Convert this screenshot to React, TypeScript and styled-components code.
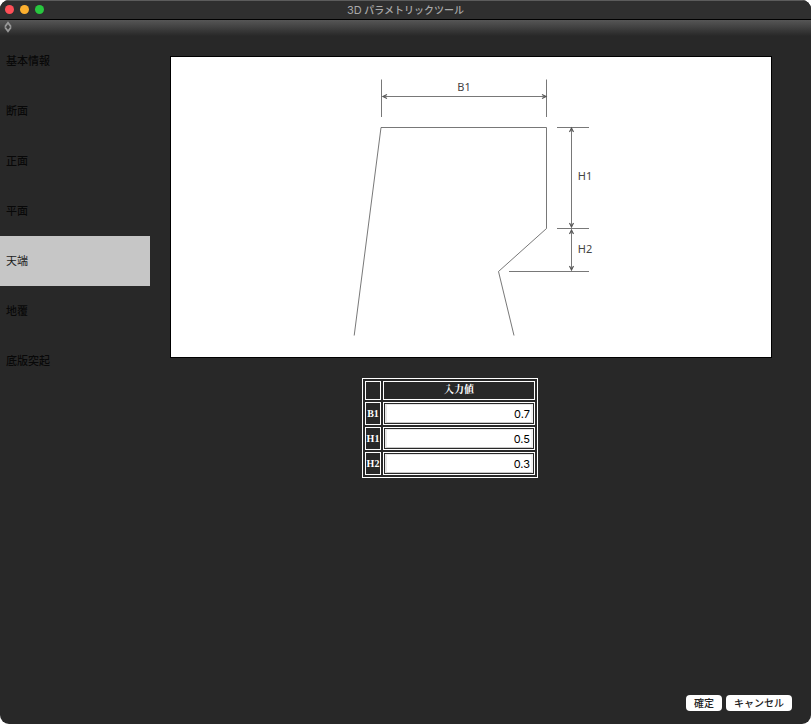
import React, { useState } from "react";
import styled, { createGlobalStyle } from "styled-components";

const GlobalStyle = createGlobalStyle`
  * { box-sizing: border-box; }
  body {
    margin: 0;
    background: #fff;
    font-family: Inter, "Noto Sans CJK JP", sans-serif;
    font-size: 11px;
  }
`;

const Window = styled.div`
  display: flex;
  flex-direction: column;
  min-height: 100vh;
  overflow: hidden;
  border-radius: 9px;
  background: #282828;
`;

const TitleBar = styled.header`
  display: grid;
  grid-template-columns: 1fr auto 1fr;
  align-items: center;
  height: 20px;
  padding: 0 5px 1px;
  background: #2f2f2f;
  border-top: 1px solid #5c5c5c;
  border-bottom: 1px solid #000;
`;

const Lights = styled.div`
  display: flex;
  gap: 6px;
`;

const Light = styled.button<{ $color: string }>`
  width: 9px;
  height: 9px;
  padding: 0;
  border: 0;
  border-radius: 50%;
  background: ${(p) => p.$color};
`;

const Title = styled.h1`
  margin: 0;
  font-size: 10px;
  font-weight: 500;
  line-height: 16px;
  color: #a9a9a9;
`;

const Latin = styled.span`
  font-size: 11px;
  font-weight: 400;
`;

const Toolbar = styled.div`
  display: flex;
  height: 16px;
  padding: 1px 3px;
  background: linear-gradient(#565656, #282828);
`;

const ToolbarToggle = styled.button`
  display: flex;
  width: 10px;
  height: 12px;
  padding: 0;
  border: 0;
  background: none;
`;

const Body = styled.div`
  display: flex;
  flex: 1;
`;

const Sidebar = styled.nav`
  display: flex;
  flex-direction: column;
  flex: none;
  width: 150px;
`;

const NavItem = styled.button<{ $active: boolean }>`
  height: 50px;
  padding: 0 6px 2px;
  border: 0;
  background: ${(p) => (p.$active ? "#c6c6c6" : "transparent")};
  color: ${(p) => (p.$active ? "#1c1c1c" : "#080808")};
  font: inherit;
  font-weight: ${(p) => (p.$active ? 400 : 500)};
  text-align: left;
`;

const Main = styled.main`
  display: flex;
  flex: 1;
  flex-direction: column;
  gap: 20px;
  min-width: 0;
  padding: 20px 39px 12px 20px;
`;

const Figure = styled.figure`
  margin: 0;
  border: 1px solid #000;
  background: #fff;
`;

const Drawing = styled.svg`
  display: block;
  width: 100%;
  height: auto;
  fill: none;
  stroke: #555;
  stroke-width: 0.8;
`;

const Label = styled.text`
  fill: #444;
  stroke: none;
  font-family: "Noto Sans", sans-serif;
  font-size: 11px;
  text-anchor: middle;
`;

const Values = styled.section`
  display: flex;
  justify-content: center;
  padding-right: 42px;
`;

const ValueTable = styled.table`
  table-layout: fixed;
  width: 176px;
  border: 1px solid #fff;
  border-spacing: 2px;
  color: #fff;
  font-family: "Liberation Serif", "Noto Serif CJK JP", "Noto Sans CJK JP", serif;
  font-size: 10px;
  line-height: 15px;
`;

const HeadCell = styled.th<{ $narrow?: boolean }>`
  width: ${(p) => (p.$narrow ? "16px" : "auto")};
  padding: 0 1px 2px;
  border: 1px solid #fff;
  white-space: nowrap;
`;

const RowCell = styled.th`
  padding: 0;
  border: 1px solid #fff;
`;

const ValueCell = styled.td`
  padding: 1px;
  border: 1px solid #fff;
`;

const ValueInput = styled.input`
  display: block;
  width: 100%;
  height: 19px;
  padding: 0 1px;
  border: 2px solid;
  border-color: #e6e6e6 #f4f4f4 #c8c8c8 #e6e6e6;
  border-width: 1px 2px;
  outline: 0;
  background: #fff;
  color: #000;
  font-family: Inter, sans-serif;
  font-size: 11px;
  text-align: right;
`;

const Footer = styled.footer`
  display: flex;
  justify-content: flex-end;
  gap: 4px;
  padding: 0 19px 13px;
`;

const Button = styled.button`
  height: 16px;
  padding: 0 8px;
  border: 0;
  border-radius: 4px;
  background: #fff;
  color: #222;
  font-family: inherit;
  font-size: 10px;
  font-weight: 500;
  line-height: 16px;
`;

const sections = ["基本情報", "断面", "正面", "平面", "天端", "地覆", "底版突起"];
const lights = [
  { name: "閉じる", color: "#ff4f57" },
  { name: "しまう", color: "#fdb02f" },
  { name: "拡大", color: "#28c73f" },
];

function CrestDiagram() {
  return (
    <Drawing viewBox="0 0 600 300" role="img" aria-label="天端寸法図">
      <path d="M183.2 278.5 210 70.5H375.5V171.5L327.5 214.5 343 278.5" />
      <path d="M210.5 22.5V60M375.5 22.5V60M386 70.5H418M386 171.5H418M338 214.5H418" />
      <path d="M212 39.5H375M400.5 71V170M400.5 173V213" />
      <path
        strokeWidth="1.2"
        d="M216 37.5 212 39.5 216 41.5M371 37.5 375 39.5 371 41.5M398.5 75 400.5 71 402.5 75M398.5 166 400.5 170 402.5 166M398.5 177 400.5 173 402.5 177M398.5 209 400.5 213 402.5 209"
      />
      <Label x="293" y="34">B1</Label>
      <Label x="414" y="123">H1</Label>
      <Label x="414" y="196">H2</Label>
    </Drawing>
  );
}

export default function App() {
  const [section, setSection] = useState("天端");
  const [values, setValues] = useState<Record<string, string>>({
    B1: "0.7",
    H1: "0.5",
    H2: "0.3",
  });

  return (
    <>
      <GlobalStyle />
      <Window>
        <TitleBar>
          <Lights>
            {lights.map((l) => (
              <Light key={l.name} type="button" aria-label={l.name} $color={l.color} />
            ))}
          </Lights>
          <Title><Latin>3D</Latin> パラメトリックツール</Title>
        </TitleBar>
        <Toolbar>
          <ToolbarToggle type="button" aria-label="ツールバー">
            <svg width="10" height="12" viewBox="0 0 10 12" fill="none" stroke="#999" strokeWidth="1.8">
              <path d="M2 5.8 5 1.8 8 5.8M2 6.2 5 10.2 8 6.2" />
            </svg>
          </ToolbarToggle>
        </Toolbar>
        <Body>
          <Sidebar>
            {sections.map((s) => (
              <NavItem key={s} type="button" $active={s === section} onClick={() => setSection(s)}>
                {s}
              </NavItem>
            ))}
          </Sidebar>
          <Main>
            <Figure>
              <CrestDiagram />
            </Figure>
            <Values>
              <ValueTable>
                <thead>
                  <tr>
                    <HeadCell $narrow />
                    <HeadCell>入力値</HeadCell>
                  </tr>
                </thead>
                <tbody>
                  {Object.keys(values).map((key) => (
                    <tr key={key}>
                      <RowCell scope="row">
                        <label htmlFor={key}>{key}</label>
                      </RowCell>
                      <ValueCell>
                        <ValueInput
                          id={key}
                          value={values[key]}
                          onChange={(e) => setValues({ ...values, [key]: e.target.value })}
                        />
                      </ValueCell>
                    </tr>
                  ))}
                </tbody>
              </ValueTable>
            </Values>
          </Main>
        </Body>
        <Footer>
          <Button type="button">確定</Button>
          <Button type="button">キャンセル</Button>
        </Footer>
      </Window>
    </>
  );
}
